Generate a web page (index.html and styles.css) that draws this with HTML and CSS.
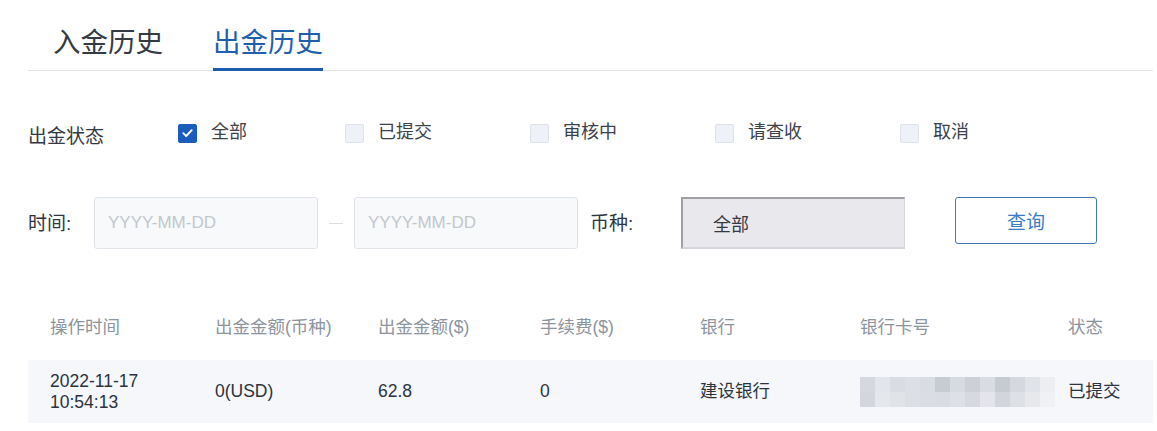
FILE: index.html
```html
<!DOCTYPE html>
<html lang="zh-CN">
<head>
<meta charset="utf-8">
<title>出金历史</title>
<link rel="stylesheet" href="styles.css">
</head>
<body>
<div class="page">
  <div class="tabs">
    <div class="tab">入金历史</div>
    <div class="tab active">出金历史</div>
  </div>

  <div class="status-row">
    <div class="row-label">出金状态</div>
    <label class="check-item">
      <span class="box checked"><svg viewBox="0 0 18 18" width="18" height="18"><path d="M4.5 9.2 L7.6 12.2 L13.5 6" fill="none" stroke="#fff" stroke-width="2" stroke-linecap="round" stroke-linejoin="round"/></svg></span>
      <span class="check-text">全部</span>
    </label>
    <label class="check-item"><span class="box"></span><span class="check-text">已提交</span></label>
    <label class="check-item"><span class="box"></span><span class="check-text">审核中</span></label>
    <label class="check-item"><span class="box"></span><span class="check-text">请查收</span></label>
    <label class="check-item"><span class="box"></span><span class="check-text">取消</span></label>
  </div>

  <div class="search-row">
    <div class="time-label">时间:</div>
    <input class="date-input" type="text" placeholder="YYYY-MM-DD">
    <div class="dash"><span></span></div>
    <input class="date-input" type="text" placeholder="YYYY-MM-DD">
    <div class="cur-label">币种:</div>
    <div class="select">全部</div>
    <button class="query-btn" type="button">查询</button>
  </div>

  <div class="table">
    <div class="thead">
      <div class="cell">操作时间</div>
      <div class="cell">出金金额(币种)</div>
      <div class="cell">出金金额($)</div>
      <div class="cell">手续费($)</div>
      <div class="cell">银行</div>
      <div class="cell">银行卡号</div>
      <div class="cell">状态</div>
    </div>
    <div class="trow">
      <div class="cell">2022-11-17<br>10:54:13</div>
      <div class="cell">0(USD)</div>
      <div class="cell">62.8</div>
      <div class="cell">0</div>
      <div class="cell">建设银行</div>
      <div class="cell">
        <div class="mosaic">
          <span></span><span></span><span></span><span></span><span></span><span></span><span></span><span></span><span></span><span></span><span></span><span></span><span></span>
          <span></span><span></span><span></span><span></span><span></span><span></span><span></span><span></span><span></span><span></span><span></span><span></span><span></span>
        </div>
      </div>
      <div class="cell">已提交</div>
    </div>
  </div>
</div>
</body>
</html>
```

FILE: styles.css
```css
* { box-sizing: border-box; }

body {
  margin: 0;
  background: #ffffff;
  font-family: "Liberation Sans", "Noto Sans CJK SC", sans-serif;
  color: #333a44;
}

.page {
  width: 1125px;
  margin-left: 28px;
}

/* Tabs */
.tabs {
  display: flex;
  gap: 50px;
  padding-left: 25px;
  border-bottom: 1px solid #e2e5e9;
  height: 71px;
}

.tab {
  height: 71px;
  padding-top: 28px;
  font-size: 27.5px;
  line-height: 30px;
  color: #343b45;
  margin-bottom: -1px;
  border-bottom: 3px solid transparent;
}

.tab.active {
  color: #1f5fae;
  border-bottom-color: #1d5cab;
}

/* Status row */
.status-row {
  display: flex;
  align-items: center;
  height: 40px;
  margin-top: 42px;
  font-size: 18px;
}

.row-label {
  width: 150px;
  font-size: 19px;
  color: #333a44;
  margin-top: 2px;
}

.check-item {
  display: flex;
  align-items: center;
  margin-right: 98px;
  margin-top: 0;
}

.box {
  width: 19px;
  height: 19px;
  border-radius: 2px;
  background: #eef2f8;
  border: 1px solid #dde2ea;
  margin-right: 14px;
  display: flex;
  align-items: center;
  justify-content: center;
}

.box.checked {
  background: #1b5cbd;
  border-color: #1b5cbd;
}

.check-text {
  color: #3b424c;
  line-height: 20px;
  margin-top: -3px;
}

/* Search row */
.search-row {
  display: flex;
  align-items: center;
  margin-top: 44px;
  height: 52px;
}

.time-label {
  width: 66px;
  font-size: 19px;
  color: #2f3640;
  margin-top: -3px;
}

.date-input {
  width: 224px;
  height: 52px;
  border: 1px solid #e0e3e8;
  border-radius: 3px;
  background: #f8f9fa;
  padding: 0 0 0 13px;
  font-family: "Liberation Sans", sans-serif;
  font-size: 17px;
  color: #333;
  outline: none;
}

.date-input::placeholder {
  color: #c2c7ce;
}

.dash {
  width: 36px;
  display: flex;
  justify-content: center;
}

.dash span {
  width: 14px;
  height: 1px;
  background: #dcdfe4;
}

.cur-label {
  width: 103px;
  padding-left: 12px;
  font-size: 19px;
  color: #2f3640;
  margin-top: -3px;
}

.select {
  width: 224px;
  height: 52px;
  background: #e9e9ed;
  border-top: 2px solid #9e9ea3;
  border-left: 2px solid #9e9ea3;
  border-right: 1px solid #d3d7dd;
  border-bottom: 2px solid #d3d7dd;
  padding-left: 30px;
  display: flex;
  align-items: center;
  font-size: 18px;
  color: #333a44;
}

.query-btn {
  width: 142px;
  height: 47px;
  margin-left: 50px;
  margin-top: -5px;
  border: 1px solid #3c79b8;
  border-radius: 3px;
  background: #ffffff;
  color: #3a7bc6;
  font-family: "Liberation Sans", "Noto Sans CJK SC", sans-serif;
  font-size: 19px;
  padding: 0;
}

/* Table */
.table {
  margin-top: 51px;
}

.thead,
.trow {
  display: grid;
  grid-template-columns: 187px 163px 162px 160px 160px 208px 85px;
  align-items: center;
}

.thead {
  height: 50px;
  color: #8c949e;
  font-size: 17.5px;
}

.thead .cell:first-child,
.trow .cell:first-child {
  padding-left: 22px;
}

.trow {
  margin-top: 10px;
  height: 63px;
  background: #f5f7fb;
  font-size: 17.5px;
  line-height: 21px;
  color: #2c333d;
}

.mosaic {
  display: grid;
  grid-template-columns: repeat(13, 15px);
  grid-template-rows: 15px 15px;
  margin-top: 1px;
}

.mosaic span:nth-child(1)  { background: #d5d8de; }
.mosaic span:nth-child(2)  { background: #e3e5ea; }
.mosaic span:nth-child(3)  { background: #d9dce2; }
.mosaic span:nth-child(4)  { background: #dcdfe4; }
.mosaic span:nth-child(5)  { background: #d9dce2; }
.mosaic span:nth-child(6)  { background: #c7cbd2; }
.mosaic span:nth-child(7)  { background: #d7dae0; }
.mosaic span:nth-child(8)  { background: #cdd0d7; }
.mosaic span:nth-child(9)  { background: #d9dce2; }
.mosaic span:nth-child(10) { background: #c6cad1; }
.mosaic span:nth-child(11) { background: #d5d8de; }
.mosaic span:nth-child(12) { background: #e0e3e8; }
.mosaic span:nth-child(13) { background: #eceef2; }
.mosaic span:nth-child(14) { background: #d3d6dc; }
.mosaic span:nth-child(15) { background: #e5e7ec; }
.mosaic span:nth-child(16) { background: #e0e3e8; }
.mosaic span:nth-child(17) { background: #dcdfe4; }
.mosaic span:nth-child(18) { background: #dadde3; }
.mosaic span:nth-child(19) { background: #d9dce2; }
.mosaic span:nth-child(20) { background: #dde0e5; }
.mosaic span:nth-child(21) { background: #d6d9df; }
.mosaic span:nth-child(22) { background: #e3e5ea; }
.mosaic span:nth-child(23) { background: #d2d5db; }
.mosaic span:nth-child(24) { background: #dde0e5; }
.mosaic span:nth-child(25) { background: #e6e8ec; }
.mosaic span:nth-child(26) { background: #f0f1f4; }
```
